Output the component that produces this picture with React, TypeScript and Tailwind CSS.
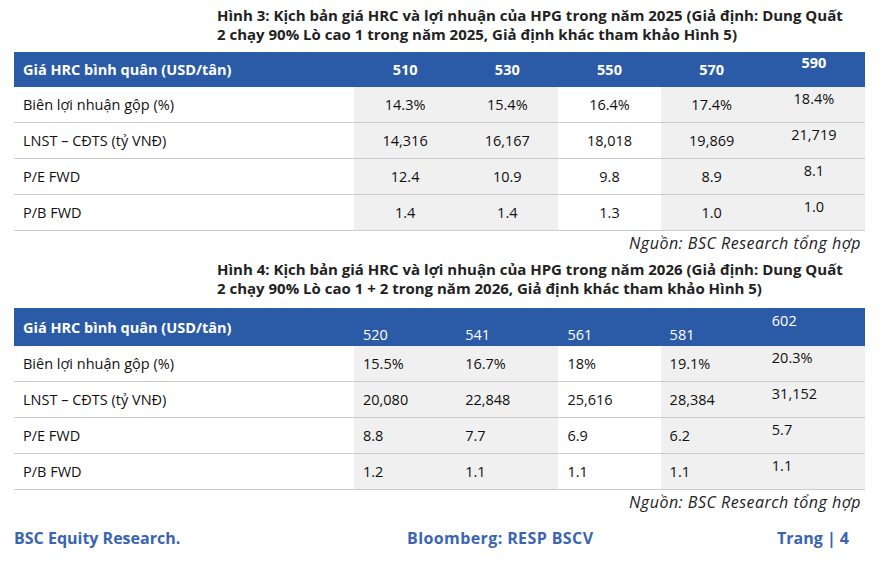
const font = { fontFamily: "'Open Sans', sans-serif" }

type Table = {
  header: string[]
  rows: { label: string; values: string[] }[]
}

const table1: Table = {
  header: ["510", "530", "550", "570", "590"],
  rows: [
    { label: "Biên lợi nhuận gộp (%)", values: ["14.3%", "15.4%", "16.4%", "17.4%", "18.4%"] },
    { label: "LNST – CĐTS (tỷ VNĐ)", values: ["14,316", "16,167", "18,018", "19,869", "21,719"] },
    { label: "P/E FWD", values: ["12.4", "10.9", "9.8", "8.9", "8.1"] },
    { label: "P/B FWD", values: ["1.4", "1.4", "1.3", "1.0", "1.0"] },
  ],
}

const table2: Table = {
  header: ["520", "541", "561", "581", "602"],
  rows: [
    { label: "Biên lợi nhuận gộp (%)", values: ["15.5%", "16.7%", "18%", "19.1%", "20.3%"] },
    { label: "LNST – CĐTS (tỷ VNĐ)", values: ["20,080", "22,848", "25,616", "28,384", "31,152"] },
    { label: "P/E FWD", values: ["8.8", "7.7", "6.9", "6.2", "5.7"] },
    { label: "P/B FWD", values: ["1.2", "1.1", "1.1", "1.1", "1.1"] },
  ],
}

const shaded = [true, true, false, true, true]

function Title({ lines }: { lines: [string, string] }) {
  return (
    <div className="pl-[217px] text-[15px] font-bold leading-[19px] text-[#222] whitespace-nowrap">
      <div>{lines[0]}</div>
      <div>{lines[1]}</div>
    </div>
  )
}

function Source() {
  return (
    <div className="pr-[30px] text-right text-[16px] italic leading-[19px] tracking-[0.5px] text-[#222]">
      Nguồn: BSC Research tổng hợp
    </div>
  )
}

function FirstTable() {
  return (
    <div className="ml-[14px] w-[851px] text-[14.5px] text-[#111]">
      <div className="grid h-[35px] grid-cols-[340px_repeat(5,minmax(0,1fr))] bg-[#2b5aa6] font-bold text-white">
        <div className="flex items-center pl-[9px]">Giá HRC bình quân (USD/tân)</div>
        {table1.header.map((h, i) => (
          <div key={h} className={`flex justify-center ${i === 4 ? "items-start pt-0" : "items-center"}`}>
            {h}
          </div>
        ))}
      </div>
      {table1.rows.map((r) => (
        <div key={r.label} className="grid h-[36px] grid-cols-[340px_repeat(5,minmax(0,1fr))] border-b border-[#cbcbcb]">
          <div className="flex items-center pl-[9px]">{r.label}</div>
          {r.values.map((v, i) => (
            <div
              key={i}
              className={`flex justify-center ${shaded[i] ? "bg-[#f0f0f0]" : ""} ${i === 4 ? "items-start pt-[1px]" : "items-center"}`}
            >
              {v}
            </div>
          ))}
        </div>
      ))}
    </div>
  )
}

function SecondTable() {
  return (
    <div className="ml-[14px] w-[851px] text-[14.5px] text-[#111]">
      <div className="grid h-[38px] grid-cols-[340px_repeat(5,minmax(0,1fr))] bg-[#2b5aa6] text-white">
        <div className="flex items-start pl-[9px] pt-[9px] font-bold">Giá HRC bình quân (USD/tân)</div>
        {table2.header.map((h, i) => (
          <div key={h} className={`flex pl-[9px] ${i === 4 ? "items-start pt-[2px]" : "items-end"}`}>
            {h}
          </div>
        ))}
      </div>
      {table2.rows.map((r) => (
        <div key={r.label} className="grid h-[36px] grid-cols-[340px_repeat(5,minmax(0,1fr))] border-b border-[#cbcbcb]">
          <div className="flex items-center pl-[9px]">{r.label}</div>
          {r.values.map((v, i) => (
            <div
              key={i}
              className={`flex pl-[9px] ${shaded[i] ? "bg-[#f0f0f0]" : ""} ${i === 4 ? "items-start pt-[1px]" : "items-center"}`}
            >
              {v}
            </div>
          ))}
        </div>
      ))}
    </div>
  )
}

export default function App() {
  return (
    <div className="h-[564px] w-[891px] overflow-hidden bg-white" style={font}>
      <div className="pt-[6px]">
        <Title
          lines={[
            "Hình 3: Kịch bản giá HRC và lợi nhuận của HPG trong năm 2025 (Giả định: Dung Quất",
            "2 chạy 90% Lò cao 1 trong năm 2025, Giả định khác tham khảo Hình 5)",
          ]}
        />
      </div>
      <div className="mt-[8px]">
        <FirstTable />
      </div>
      <div className="mt-[3px]">
        <Source />
      </div>
      <div className="mt-[7px]">
        <Title
          lines={[
            "Hình 4: Kịch bản giá HRC và lợi nhuận của HPG trong năm 2026 (Giả định: Dung Quất",
            "2 chạy 90% Lò cao 1 + 2 trong năm 2026,  Giả định khác tham khảo Hình 5)",
          ]}
        />
      </div>
      <div className="mt-[10px]">
        <SecondTable />
      </div>
      <div className="mt-[3px]">
        <Source />
      </div>
      <div className="mt-[16px] flex items-center pl-[14px] pr-[42px] text-[16px] font-bold leading-[20px] text-[#3a64b2]">
        <span className="w-[393px]">BSC Equity Research.</span>
        <span className="tracking-[0.4px]">Bloomberg: RESP BSCV</span>
        <span className="ml-auto">Trang | 4</span>
      </div>
    </div>
  )
}
